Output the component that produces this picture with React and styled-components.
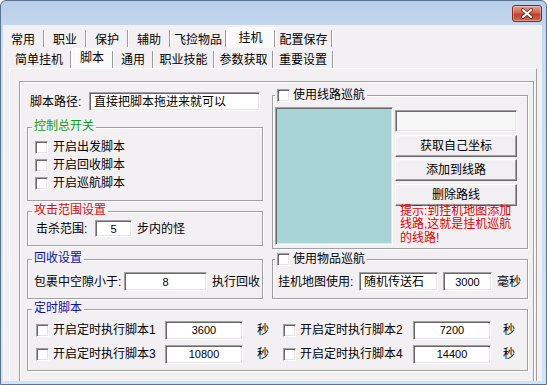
import styled, { createGlobalStyle } from "styled-components";

const GlobalStyle = createGlobalStyle`
  html, body {
    margin: 0;
    padding: 0;
    background: #ffffff;
  }
  body {
    font-family: "Liberation Sans", "Noto Sans CJK SC", sans-serif;
    font-size: 12px;
    color: #000;
  }
`;

const PAGE_BG = "#f3f0f3";

const Win = styled.div`
  width: 547px;
  height: 385px;
  box-sizing: border-box;
  display: flex;
  flex-direction: column;
  border: 1px solid #5a7393;
  border-radius: 6px 6px 0 0;
  background: linear-gradient(#b8cee9, #cadbef 40px, #d3e2f2);
  overflow: hidden;
`;

const TitleBar = styled.div`
  height: 24px;
  flex: none;
  display: flex;
  justify-content: flex-end;
  align-items: flex-start;
  padding: 4px 4px 0 0;
  box-sizing: border-box;
`;

const CloseBtn = styled.div`
  width: 30px;
  height: 17px;
  box-sizing: border-box;
  border: 1px solid #7b2c22;
  border-radius: 3px;
  background: linear-gradient(#e4a194, #d2634f 45%, #c2402b 55%, #d0684e);
  box-shadow: inset 0 0 0 1px rgba(255, 255, 255, 0.35);
  display: flex;
  align-items: center;
  justify-content: center;
`;

const Client = styled.div`
  flex: 1;
  margin: 0 4px 3px 2px;
  background: ${PAGE_BG};
  display: flex;
  flex-direction: column;
  padding-top: 2px;
  overflow: hidden;
`;

const TabRow = styled.div`
  display: flex;
  height: ${(p) => p.$h}px;
  padding-left: ${(p) => p.$pl}px;
  flex: none;
`;

const Tab = styled.div`
  width: ${(p) => p.$w}px;
  height: 100%;
  box-sizing: border-box;
  display: flex;
  align-items: center;
  flex: none;
  background: ${(p) => (p.$sel ? "#faf9fb" : "transparent")};
  box-shadow: ${(p) => (p.$sel ? "inset 1px 1px 0 #ffffff" : "none")};
`;

const TabLabel = styled.span`
  flex: 1;
  text-align: center;
  line-height: 14px;
  padding-top: ${(p) => (p.$sel ? 0 : 4)}px;
  white-space: nowrap;
`;

const Sep = styled.span`
  width: 0;
  height: 17px;
  margin-top: 2px;
  border-left: 1px solid #9b9b9b;
  border-right: 1px solid #ffffff;
`;

const OuterPage = styled.div`
  flex: 1;
  display: flex;
  flex-direction: column;
  border-left: 1px solid #ffffff;
  margin-right: 1px;
  padding-left: 4px;
`;

const InnerPage = styled.div`
  flex: 1;
  margin: 0 4px 0 1px;
  border-top: 1px solid #ffffff;
  border-left: 1px solid #ffffff;
  border-right: 1px solid #a0a0a0;
  padding: 12px 0 0 9px;
`;

const ContentBox = styled.div`
  width: 515px;
  height: 320px;
  box-sizing: border-box;
  border: 1px solid #a0a0a0;
  box-shadow: inset 1px 1px 0 #ffffff, 1px 1px 0 #ffffff;
  padding: 10px 5px 0 7px;
`;

const Layout = styled.div`
  display: grid;
  grid-template-columns: 236px 256px;
  column-gap: 9px;
  row-gap: 10px;
  align-items: start;
`;

const Column = styled.div`
  display: flex;
  flex-direction: column;
`;

const Group = styled.div`
  position: relative;
  box-sizing: border-box;
  border: 1px solid #a0a0a0;
  box-shadow: inset 1px 1px 0 #ffffff, 1px 1px 0 #ffffff;
  margin-top: ${(p) => p.$mt || 0}px;
  padding: ${(p) => p.$pad};
  grid-column: ${(p) => (p.$span ? "1 / -1" : "auto")};
`;

const Caption = styled.div`
  position: absolute;
  top: -8px;
  left: ${(p) => p.$left}px;
  padding: 0 2px;
  background: ${PAGE_BG};
  color: ${(p) => p.$color || "#000"};
  line-height: 13px;
  display: flex;
  align-items: center;
  gap: 3px;
  white-space: nowrap;
`;

const Row = styled.div`
  display: flex;
  align-items: center;
  height: ${(p) => p.$h}px;
  gap: ${(p) => p.$gap || 0}px;
  padding-left: ${(p) => p.$pl || 0}px;
  white-space: nowrap;
`;

const Label = styled.span`
  line-height: 14px;
  width: ${(p) => (p.$w ? `${p.$w}px` : "auto")};
  flex: none;
`;

const Check = styled.span`
  width: 13px;
  height: 13px;
  box-sizing: border-box;
  flex: none;
  border: 1px solid;
  border-color: #a0a0a0 #ffffff #ffffff #a0a0a0;
  box-shadow: inset 1px 1px 0 #696969, inset -1px -1px 0 #e3e3e3;
  background: #ffffff;
  margin-right: ${(p) => p.$mr || 0}px;
`;

const Edit = styled.div`
  width: ${(p) => p.$w}px;
  height: ${(p) => p.$h}px;
  box-sizing: border-box;
  flex: none;
  border: 1px solid;
  border-color: #a0a0a0 #ffffff #ffffff #a0a0a0;
  box-shadow: inset 1px 1px 0 #696969, inset -1px -1px 0 #e3e3e3;
  background: ${(p) => p.$bg || "#ffffff"};
  display: flex;
  align-items: center;
  justify-content: ${(p) => (p.$center ? "center" : "flex-start")};
  padding: 0 4px;
  line-height: 14px;
  font-size: ${(p) => (p.$num ? 11 : 12)}px;
  overflow: hidden;
`;

const ListBox = styled.div`
  width: 118px;
  height: 138px;
  box-sizing: border-box;
  flex: none;
  border: 1px solid;
  border-color: #a0a0a0 #ffffff #ffffff #a0a0a0;
  box-shadow: inset 1px 1px 0 #696969, inset -1px -1px 0 #e3e3e3;
  background: #a8d4d7;
`;

const Stack = styled.div`
  display: flex;
  flex-direction: column;
  width: 123px;
  padding-top: 3px;
`;

const Button = styled.div`
  height: 22px;
  box-sizing: border-box;
  margin-top: ${(p) => p.$mt}px;
  border: 1px solid;
  border-color: #ffffff #696969 #696969 #ffffff;
  box-shadow: inset -1px -1px 0 #a0a0a0, inset 1px 1px 0 #f4f4f4;
  background: #f1eff1;
  display: flex;
  align-items: center;
  justify-content: center;
  line-height: 14px;
`;

const Tip = styled.div`
  margin-top: -1px;
  padding-left: 5px;
  color: #e00000;
  white-space: nowrap;
`;

const TipLine = styled.div`
  height: 13.4px;
  line-height: 13.4px;
`;

const Split = styled.div`
  display: flex;
  gap: 2px;
`;

const TimerRow = styled.div`
  display: grid;
  grid-template-columns: 17px 112px 92px 26px 17px 113px 90px 14px;
  align-items: center;
  height: 24px;
`;

const outerTabs = [
  { name: "常用", w: 42 },
  { name: "职业", w: 42 },
  { name: "保护", w: 42 },
  { name: "辅助", w: 42 },
  { name: "飞捡物品", w: 56 },
  { name: "挂机", w: 49, sel: true },
  { name: "配置保存", w: 57 },
];

const innerTabs = [
  { name: "简单挂机", w: 64 },
  { name: "脚本", w: 42, sel: true },
  { name: "通用", w: 40 },
  { name: "职业技能", w: 61 },
  { name: "参数获取", w: 59 },
  { name: "重要设置", w: 60 },
];

const timers = [
  [
    { label: "开启定时执行脚本1", value: "3600" },
    { label: "开启定时执行脚本2", value: "7200" },
  ],
  [
    { label: "开启定时执行脚本3", value: "10800" },
    { label: "开启定时执行脚本4", value: "14400" },
  ],
];

const tipLines = ["提示:到挂机地图添加", "线路,这就是挂机巡航", "的线路!"];

function Tabs({ items, h, pl }) {
  return (
    <TabRow $h={h} $pl={pl}>
      {items.map((t) => (
        <Tab key={t.name} $w={t.w} $sel={t.sel}>
          <TabLabel $sel={t.sel}>{t.name}</TabLabel>
          <Sep />
        </Tab>
      ))}
    </TabRow>
  );
}

export default function App() {
  return (
    <>
      <GlobalStyle />
      <Win>
        <TitleBar>
          <CloseBtn>
            <svg width="14" height="11" viewBox="0 0 14 11">
              <path
                d="M3 2 L11 9 M11 2 L3 9"
                stroke="#5a1a12"
                strokeWidth="3.6"
                strokeLinecap="round"
              />
              <path
                d="M3 2 L11 9 M11 2 L3 9"
                stroke="#ffffff"
                strokeWidth="2.2"
                strokeLinecap="round"
              />
            </svg>
          </CloseBtn>
        </TitleBar>
        <Client>
          <Tabs items={outerTabs} h={21} pl={0} />
          <OuterPage>
            <Tabs items={innerTabs} h={20} pl={0} />
            <InnerPage>
              <ContentBox>
                <Layout>
                  <Column>
                    <Row $h={19} $pl={3} $gap={4}>
                      <Label $w={55}>脚本路径:</Label>
                      <Edit $w={171} $h={19}>
                        直接把脚本拖进来就可以
                      </Edit>
                    </Row>

                    <Group $mt={16} $pad="10px 7px 8px">
                      <Caption $left={4} $color="#10a010">
                        控制总开关
                      </Caption>
                      <Row $h={18}>
                        <Check $mr={5} />
                        <Label>开启出发脚本</Label>
                      </Row>
                      <Row $h={18}>
                        <Check $mr={5} />
                        <Label>开启回收脚本</Label>
                      </Row>
                      <Row $h={18}>
                        <Check $mr={5} />
                        <Label>开启巡航脚本</Label>
                      </Row>
                    </Group>

                    <Group $mt={10} $pad="8px 8px 8px">
                      <Caption $left={4} $color="#d01010">
                        攻击范围设置
                      </Caption>
                      <Row $h={17} $gap={5}>
                        <Label $w={54}>击杀范围:</Label>
                        <Edit $w={37} $h={17} $center $num>
                          5
                        </Edit>
                        <Label>步内的怪</Label>
                      </Row>
                    </Group>
                  </Column>

                  <Group $mt={3} $pad="11px 10px 3px 2px">
                    <Caption $left={2}>
                      <Check />
                      <Label>使用线路巡航</Label>
                    </Caption>
                    <Split>
                      <ListBox />
                      <Stack>
                        <Edit $w={122} $h={22} $bg="#f7f7f7" />
                        <Button $mt={3}>获取自己坐标</Button>
                        <Button $mt={2}>添加到线路</Button>
                        <Button $mt={3}>删除路线</Button>
                        <Tip>
                          {tipLines.map((line) => (
                            <TipLine key={line}>{line}</TipLine>
                          ))}
                        </Tip>
                      </Stack>
                    </Split>
                  </Group>

                  <Group $pad="12px 6px 7px">
                    <Caption $left={4} $color="#1010a0">
                      回收设置
                    </Caption>
                    <Row $h={19} $gap={5}>
                      <Label $w={85}>包裹中空隙小于:</Label>
                      <Edit $w={83} $h={19} $center $num>
                        8
                      </Edit>
                      <Label>执行回收</Label>
                    </Row>
                  </Group>

                  <Group $pad="12px 5px 7px">
                    <Caption $left={2}>
                      <Check />
                      <Label>使用物品巡航</Label>
                    </Caption>
                    <Row $h={19} $gap={5}>
                      <Label $w={76}>挂机地图使用:</Label>
                      <Edit $w={79} $h={19}>
                        随机传送石
                      </Edit>
                      <Edit $w={49} $h={19} $center $num>
                        3000
                      </Edit>
                      <Label>毫秒</Label>
                    </Row>
                  </Group>

                  <Group $span $pad="8px 8px 4px">
                    <Caption $left={4} $color="#1010a0">
                      定时脚本
                    </Caption>
                    {timers.map((row, i) => (
                      <TimerRow key={i}>
                        {row.map((t) => [
                          <Check key={t.label + "c"} />,
                          <Label key={t.label}>{t.label}</Label>,
                          <Edit key={t.label + "e"} $w={78} $h={19} $center $num>
                            {t.value}
                          </Edit>,
                          <Label key={t.label + "s"}>秒</Label>,
                        ])}
                      </TimerRow>
                    ))}
                  </Group>
                </Layout>
              </ContentBox>
            </InnerPage>
          </OuterPage>
        </Client>
      </Win>
    </>
  );
}
